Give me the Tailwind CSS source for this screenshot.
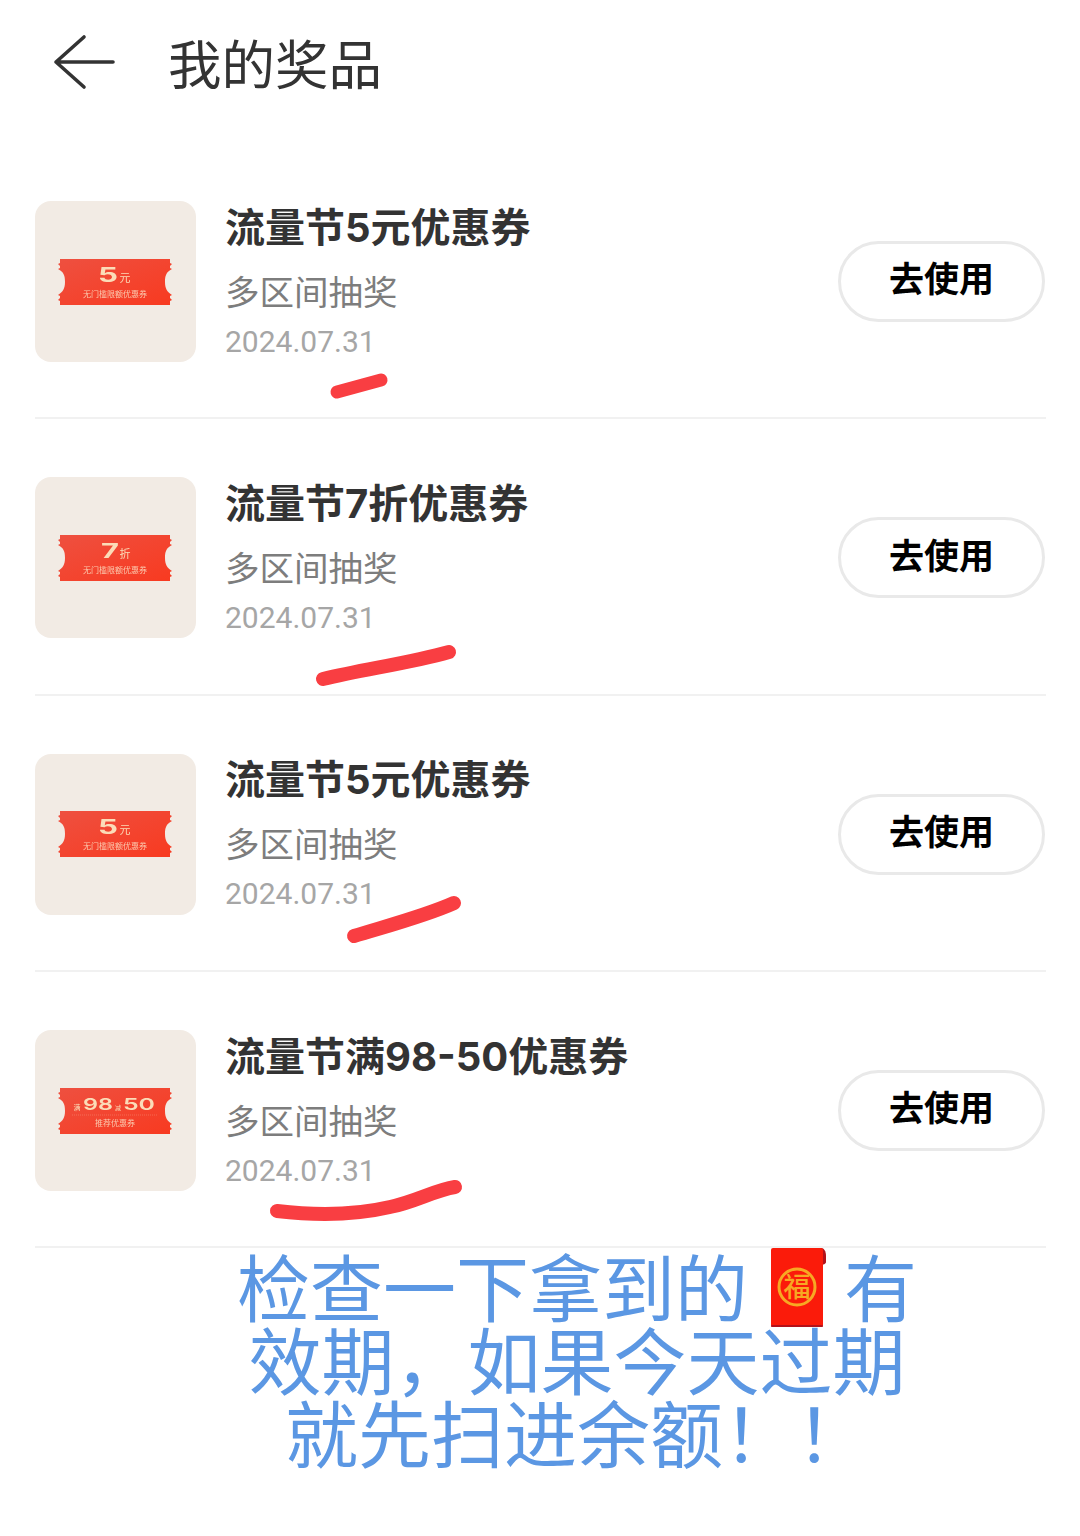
<!doctype html>
<html lang="zh-CN">
<head>
<meta charset="utf-8">
<script src="https://cdn.jsdelivr.net/npm/@tailwindcss/browser@4"></script>
<title>我的奖品</title>
</head>
<body class="bg-white">
<div class="relative w-[1080px] h-[1536px] overflow-hidden bg-white font-['Noto_Sans_CJK_SC','Noto_Sans',sans-serif]">
  <header class="h-[143px] flex items-start pt-[34px] pl-[53px]">
    <svg class="w-[62px] h-[56px] shrink-0" viewBox="0 0 62 56" fill="none" stroke="#333" stroke-width="3.6" stroke-linecap="round" stroke-linejoin="round"><path d="M31 3 3 28l28 25M3 28h57"/></svg>
    <h1 class="ml-[53px] -mt-[3px] text-[53.5px] leading-[62px] text-[#333] font-normal">我的奖品</h1>
  </header>

  <main class="ml-[35px] mr-[34px]">
    <section class="h-[276.3px] flex items-center border-b-2 border-[#f1f1f1] pt-[3px]">
      <div class="w-[161px] h-[161px] shrink-0 rounded-[16px] bg-[#f2ebe4] flex items-center justify-center pr-px">
        <svg class="w-[114px] h-[48px] blur-[0.4px]" viewBox="0 0 114 48"><defs><linearGradient id="a" x1="0" y1="0" x2="1" y2="1"><stop offset="0" stop-color="#ee5040"/><stop offset="1" stop-color="#f83a20"/></linearGradient></defs><path d="M2 1h110v4l2 1-2 2v2l2 1c-6 3-7 7-7 13s2 10 7 13l-2 1v2l2 2-2 1v4H2v-4l-2-1 2-2v-2l-2-1c5-3 7-7 7-13S6 14 0 11l2-1V8L0 6l2-1z" fill="url(#a)"/><text x="50" y="24" font-size="20" font-weight="700" fill="#fbdcb8" text-anchor="middle" font-family="Inter" textLength="20" lengthAdjust="spacingAndGlyphs">5</text><text x="67" y="24" font-size="11" fill="#fbdcb8" text-anchor="middle">元</text><text x="57" y="39" font-size="8" fill="#fbc9ae" text-anchor="middle">无门槛限额优惠券</text></svg>
      </div>
      <div class="ml-[29px] flex-1 min-w-0">
        <h2 class="h-[54px] -mt-px font-['Inter','Noto_Sans_CJK_SC',sans-serif] text-[40px] leading-[54px] font-bold text-[#333]">流量节5元优惠券</h2>
        <p class="mt-[12px] text-[34.5px] leading-[46px] text-[#7d7d7d]">多区间抽奖</p>
        <p class="mt-[9px] text-[30px] leading-[40px] text-[#a6a6a6] font-['Roboto']">2024.07.31</p>
      </div>
      <button class="w-[207px] h-[81px] mr-px pb-[8px] shrink-0 rounded-full border-[3px] border-[#e9e9e9] text-[35px] font-bold text-black">去使用</button>
    </section>

    <section class="h-[276.3px] flex items-center border-b-2 border-[#f1f1f1] pt-[3px]">
      <div class="w-[161px] h-[161px] shrink-0 rounded-[16px] bg-[#f2ebe4] flex items-center justify-center pr-px">
        <svg class="w-[114px] h-[48px] blur-[0.4px]" viewBox="0 0 114 48"><path d="M2 1h110v4l2 1-2 2v2l2 1c-6 3-7 7-7 13s2 10 7 13l-2 1v2l2 2-2 1v4H2v-4l-2-1 2-2v-2l-2-1c5-3 7-7 7-13S6 14 0 11l2-1V8L0 6l2-1z" fill="url(#a)"/><text x="52" y="24" font-size="20" font-weight="700" fill="#fbdcb8" text-anchor="middle" font-family="Inter" textLength="18" lengthAdjust="spacingAndGlyphs">7</text><text x="67" y="24" font-size="11" fill="#fbdcb8" text-anchor="middle">折</text><text x="57" y="39" font-size="8" fill="#fbc9ae" text-anchor="middle">无门槛限额优惠券</text></svg>
      </div>
      <div class="ml-[29px] flex-1 min-w-0">
        <h2 class="h-[54px] -mt-px font-['Inter','Noto_Sans_CJK_SC',sans-serif] text-[40px] leading-[54px] font-bold text-[#333]">流量节7折优惠券</h2>
        <p class="mt-[12px] text-[34.5px] leading-[46px] text-[#7d7d7d]">多区间抽奖</p>
        <p class="mt-[9px] text-[30px] leading-[40px] text-[#a6a6a6] font-['Roboto']">2024.07.31</p>
      </div>
      <button class="w-[207px] h-[81px] mr-px pb-[8px] shrink-0 rounded-full border-[3px] border-[#e9e9e9] text-[35px] font-bold text-black">去使用</button>
    </section>

    <section class="h-[276.3px] flex items-center border-b-2 border-[#f1f1f1] pt-[3px]">
      <div class="w-[161px] h-[161px] shrink-0 rounded-[16px] bg-[#f2ebe4] flex items-center justify-center pr-px">
        <svg class="w-[114px] h-[48px] blur-[0.4px]" viewBox="0 0 114 48"><path d="M2 1h110v4l2 1-2 2v2l2 1c-6 3-7 7-7 13s2 10 7 13l-2 1v2l2 2-2 1v4H2v-4l-2-1 2-2v-2l-2-1c5-3 7-7 7-13S6 14 0 11l2-1V8L0 6l2-1z" fill="url(#a)"/><text x="50" y="24" font-size="20" font-weight="700" fill="#fbdcb8" text-anchor="middle" font-family="Inter" textLength="20" lengthAdjust="spacingAndGlyphs">5</text><text x="67" y="24" font-size="11" fill="#fbdcb8" text-anchor="middle">元</text><text x="57" y="39" font-size="8" fill="#fbc9ae" text-anchor="middle">无门槛限额优惠券</text></svg>
      </div>
      <div class="ml-[29px] flex-1 min-w-0">
        <h2 class="h-[54px] -mt-px font-['Inter','Noto_Sans_CJK_SC',sans-serif] text-[40px] leading-[54px] font-bold text-[#333]">流量节5元优惠券</h2>
        <p class="mt-[12px] text-[34.5px] leading-[46px] text-[#7d7d7d]">多区间抽奖</p>
        <p class="mt-[9px] text-[30px] leading-[40px] text-[#a6a6a6] font-['Roboto']">2024.07.31</p>
      </div>
      <button class="w-[207px] h-[81px] mr-px pb-[8px] shrink-0 rounded-full border-[3px] border-[#e9e9e9] text-[35px] font-bold text-black">去使用</button>
    </section>

    <section class="h-[276.3px] flex items-center border-b-2 border-[#f1f1f1] pt-[3px]">
      <div class="w-[161px] h-[161px] shrink-0 rounded-[16px] bg-[#f2ebe4] flex items-center justify-center pr-px">
        <svg class="w-[114px] h-[48px] blur-[0.4px]" viewBox="0 0 114 48"><path d="M2 1h110v4l2 1-2 2v2l2 1c-6 3-7 7-7 13s2 10 7 13l-2 1v2l2 2-2 1v4H2v-4l-2-1 2-2v-2l-2-1c5-3 7-7 7-13S6 14 0 11l2-1V8L0 6l2-1z" fill="url(#a)"/><text x="19" y="23" font-size="7" fill="#fbdcb8" text-anchor="middle">满</text><text x="40" y="23" font-size="16.5" font-weight="600" fill="#fbdcb8" text-anchor="middle" font-family="Inter" textLength="30" lengthAdjust="spacingAndGlyphs">98</text><text x="60" y="23" font-size="6" fill="#fbdcb8" text-anchor="middle">减</text><text x="81" y="23" font-size="16.5" font-weight="600" fill="#fbdcb8" text-anchor="middle" font-family="Inter" textLength="32" lengthAdjust="spacingAndGlyphs">50</text><path d="M14 28h85" stroke="#fbc9ae" stroke-opacity=".5" stroke-width=".6" stroke-dasharray="1 1"/><text x="57" y="39" font-size="8" fill="#fbc9ae" text-anchor="middle">推荐优惠券</text></svg>
      </div>
      <div class="ml-[29px] flex-1 min-w-0">
        <h2 class="h-[54px] -mt-px font-['Inter','Noto_Sans_CJK_SC',sans-serif] text-[40px] leading-[54px] font-bold text-[#333]">流量节满98-50优惠券</h2>
        <p class="mt-[12px] text-[34.5px] leading-[46px] text-[#7d7d7d]">多区间抽奖</p>
        <p class="mt-[9px] text-[30px] leading-[40px] text-[#a6a6a6] font-['Roboto']">2024.07.31</p>
      </div>
      <button class="w-[207px] h-[81px] mr-px pb-[8px] shrink-0 rounded-full border-[3px] border-[#e9e9e9] text-[35px] font-bold text-black">去使用</button>
    </section>
  </main>

  <div class="pl-[74px] text-[73px] leading-[73px] text-[#5b97e3] text-center">
    <div class="h-[73px] flex items-center justify-center whitespace-nowrap">
      <span>检查一下拿到的</span>
      <svg class="ml-[23px] mr-[18px] mt-[6px] w-[55px] h-[79px] shrink-0" viewBox="0 0 55 79"><path d="M50 0c3 0 5 3 5 8v6c0 2-3 3-5 3z" fill="#b3121a"/><rect x="0" y="0" width="52" height="79" rx="2" fill="#fb1b0a"/><rect x="0" y="77" width="52" height="2" rx="1" fill="#b3121a"/><circle cx="26" cy="39" r="18" fill="none" stroke="#f7a823" stroke-width="3"/><text x="26" y="49" font-size="27" fill="#f7a823" text-anchor="middle" font-family="Noto Sans CJK SC" font-weight="500">福</text></svg>
      <span>有</span>
    </div>
    <div>效期，如果今天过期</div>
    <div>就先扫进余额！！</div>
  </div>

  <svg class="absolute left-0 top-0 w-[1080px] h-[1536px] pointer-events-none" viewBox="0 0 1080 1536" fill="none" stroke="#f93e42" stroke-linecap="round">
    <path d="M337 392 381 380" stroke-width="13"/>
    <path d="M323 679C365 669 410 663 449 652" stroke-width="14"/>
    <path d="M354 936C390 925 425 916 454 903" stroke-width="14"/>
    <path d="M277 1211C320 1216 360 1214 390 1207 415 1202 435 1190 455 1187" stroke-width="14"/>
  </svg>
</div>
</body>
</html>
